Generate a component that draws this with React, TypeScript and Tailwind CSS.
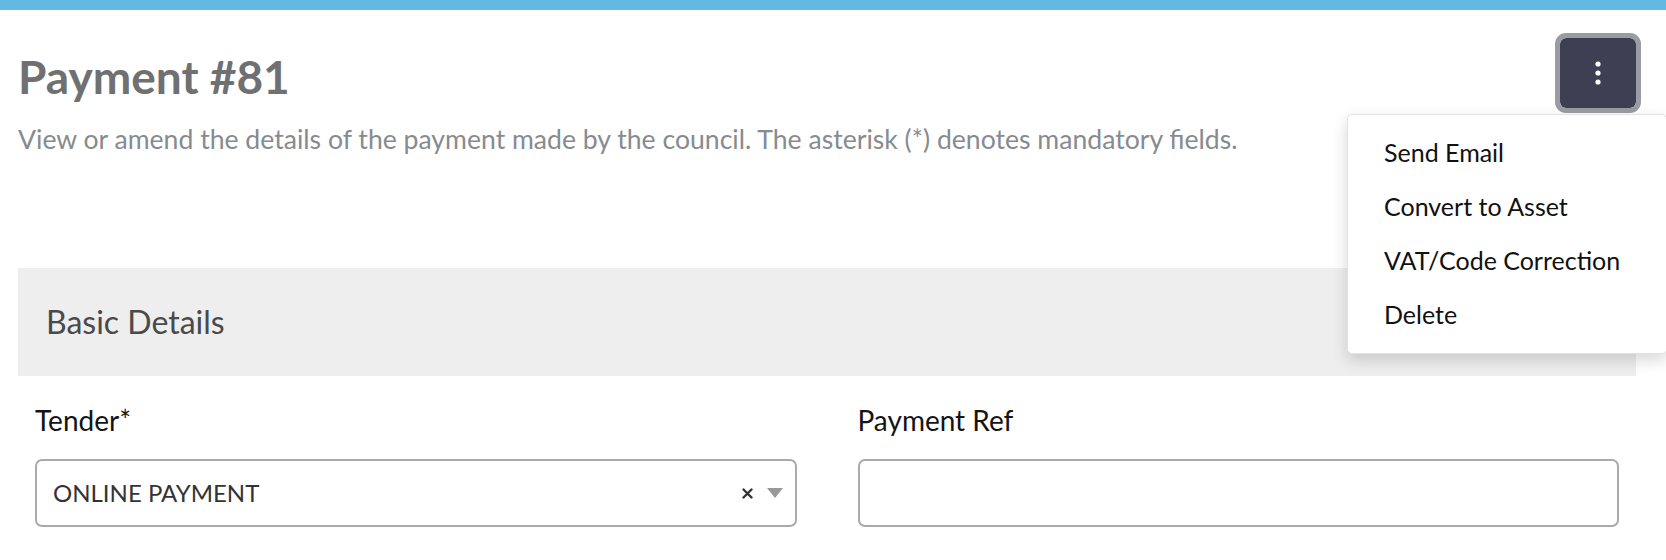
import { useState } from 'react';

const menuItems = ['Send Email', 'Convert to Asset', 'VAT/Code Correction', 'Delete'];

function KebabIcon() {
  return (
    <svg width="6" height="24" viewBox="0 0 6 24" fill="white">
      <circle cx="3" cy="3" r="2.6" />
      <circle cx="3" cy="12" r="2.6" />
      <circle cx="3" cy="21" r="2.6" />
    </svg>
  );
}

export default function App() {
  const [menuOpen, setMenuOpen] = useState(true);
  const [paymentRef, setPaymentRef] = useState('');

  return (
    <div className="min-h-[560px] w-full bg-white font-['Lato',_'Liberation_Sans',_sans-serif]">
      <div className="h-[10px] bg-[#64b9e3]" />

      <div className="ml-[18px] mr-[30px]">
        <div className="flex items-start justify-between">
          <div className="pt-[39px]">
            <h1 className="text-[46px] font-bold leading-[56px] text-[#6f7072]">Payment #81</h1>
            <p className="mt-[18px] text-[26.6px] leading-[32px] text-[#878b90]">
              View or amend the details of the payment made by the council. The asterisk (*) denotes mandatory fields.
            </p>
          </div>

          <div className="relative mt-[28px]">
            <button
              className="flex h-[70px] w-[76px] cursor-pointer items-center justify-center rounded-[6px] bg-[#3e3f52] outline-[5px] outline-[#9a9ca4] outline-solid"
              onClick={() => setMenuOpen(!menuOpen)}
            >
              <KebabIcon />
            </button>

            {menuOpen && (
              <div className="absolute right-[-31px] top-[76px] z-50 w-[320px] rounded-[5px] border border-[#e2e2e2] bg-white py-[11px] shadow-[0_6px_16px_rgba(0,0,0,0.16)]">
                {menuItems.map((item) => (
                  <button
                    key={item}
                    className="block h-[54px] w-full cursor-pointer px-[36px] text-left text-[25px] text-[#111111] hover:bg-gray-100"
                  >
                    {item}
                  </button>
                ))}
              </div>
            )}
          </div>
        </div>

        <div className="mt-[113px] bg-[#eeeeee] px-[28px] py-[31px]">
          <h2 className="text-[32px] leading-[46px] text-[#4a4a4a]">Basic Details</h2>
        </div>

        <div className="grid grid-cols-2 gap-[61px] px-[17px] pt-[28px]">
          <div>
            <label className="block text-[28px] leading-[32px] text-[#141414]">Tender*</label>
            <div className="mt-[23px] flex h-[68px] items-center rounded-[7px] border-2 border-[#aaaaaa] pl-[16px] pr-[12px]">
              <span className="flex-1 text-[24px] text-[#333333]">ONLINE PAYMENT</span>
              <svg width="11" height="11" viewBox="0 0 11 11" className="mr-[14px]">
                <path d="M1.5 1.5 L9.5 9.5 M9.5 1.5 L1.5 9.5" stroke="#333" strokeWidth="2.4" strokeLinecap="round" />
              </svg>
              <svg width="16" height="10" viewBox="0 0 16 10">
                <path d="M0 0 H16 L8 10 Z" fill="#999999" />
              </svg>
            </div>
          </div>
          <div>
            <label className="block text-[28px] leading-[32px] text-[#141414]">Payment Ref</label>
            <input
              className="mt-[23px] block h-[68px] w-full rounded-[7px] border-2 border-[#aaaaaa] px-[16px] text-[24px] outline-none"
              type="text"
              value={paymentRef}
              onChange={(e) => setPaymentRef(e.target.value)}
            />
          </div>
        </div>
      </div>
    </div>
  );
}
